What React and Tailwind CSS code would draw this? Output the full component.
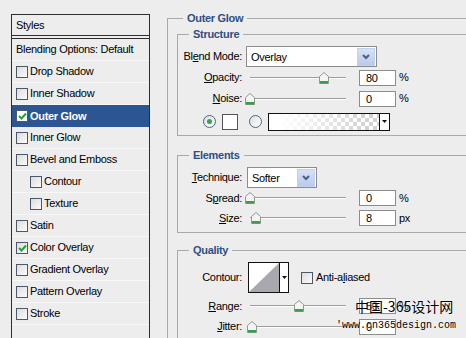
import React from 'react';

const font = { fontFamily: '"Liberation Sans", Arial, sans-serif' };

const Check = ({ checked, selected }) => (
  <div
    className={`w-[12px] h-[12px] shrink-0 border border-[#4a5868] flex items-center justify-center ${
      selected ? 'bg-white' : 'bg-gradient-to-br from-[#dcdcdc] to-[#fbfbfb]'
    }`}
  >
    {checked && (
      <svg width="9" height="8" viewBox="0 0 9 8">
        <path d="M1 4 L3.5 6.5 L8 1.5" fill="none" stroke="#22a33a" strokeWidth="2" />
      </svg>
    )}
  </div>
);

const styleRows = [
  { label: 'Drop Shadow' },
  { label: 'Inner Shadow' },
  { label: 'Outer Glow', checked: true, selected: true },
  { label: 'Inner Glow' },
  { label: 'Bevel and Emboss' },
  { label: 'Contour', indent: true },
  { label: 'Texture', indent: true },
  { label: 'Satin' },
  { label: 'Color Overlay', checked: true },
  { label: 'Gradient Overlay' },
  { label: 'Pattern Overlay' },
  { label: 'Stroke' },
];

const GroupHeader = ({ title, lead = 16 }) => (
  <div className="flex h-[14px]">
    <div className="self-end h-[7px] border-l border-t border-[#a9a9a9]" style={{ width: lead }} />
    <div className="px-[4px] text-[11px] leading-[14px] font-bold text-[#2d4f86]">{title}</div>
    <div className="self-end flex-1 h-[7px] border-t border-[#a9a9a9]" />
  </div>
);

const Chevron = () => (
  <div className="w-[18px] h-[18px] shrink-0 bg-gradient-to-b from-[#d6e2f5] to-[#b9cbea] border border-[#c3d2ec] flex items-center justify-center">
    <svg width="8" height="6" viewBox="0 0 8 6">
      <path d="M1 1 L4 4 L7 1" fill="none" stroke="#4b5f86" strokeWidth="2" />
    </svg>
  </div>
);

const Select = ({ value, width }) => (
  <div
    className="h-[21px] bg-white border border-[#8c8c8c] flex items-center pl-[4px] pr-[1px] text-[11px]"
    style={{ width }}
  >
    <span className="flex-1 pt-[2px]">{value}</span>
    <Chevron />
  </div>
);

const Label = ({ pre = '', u, post = '', width = 64 }) => (
  <div className="text-right text-[11px] shrink-0" style={{ width }}>
    {pre}
    <u>{u}</u>
    {post}
  </div>
);

const Thumb = () => (
  <svg width="10" height="12" viewBox="0 0 10 12">
    <path d="M5 0.5 L9.5 4.5 V11.5 H0.5 V4.5 Z" fill="#f4f4f4" stroke="#8e9a8e" />
    <rect x="1" y="9" width="8" height="2.5" fill="#3d9b4f" />
  </svg>
);

const Slider = ({ pos }) => (
  <div className="relative w-[106px] h-[14px] ml-[4px]">
    <div className="absolute left-[4px] right-[6px] top-[6px] h-[2px] border-t border-[#9d9d9d] border-b border-b-white" />
    <div className="absolute top-[1px]" style={{ left: pos - 5 }}>
      <Thumb />
    </div>
  </div>
);

const Field = ({ value, unit }) => (
  <>
    <div className="ml-[7px] w-[37px] h-[16px] bg-white border border-[#8c8c8c] text-[11px] leading-[14px] pl-[6px]">
      {value}
    </div>
    <div className="ml-[3px] text-[11px]">{unit}</div>
  </>
);

const SliderRow = ({ label, pos, value, unit, h = 21 }) => (
  <div className="flex items-center" style={{ height: h }}>
    {label}
    <Slider pos={pos} />
    <Field value={value} unit={unit} />
  </div>
);

const Radio = ({ on }) => (
  <div className="w-[13px] h-[13px] rounded-full border border-[#51667e] bg-gradient-to-br from-[#dedede] to-white flex items-center justify-center shrink-0">
    {on && <div className="w-[5px] h-[5px] rounded-full bg-[#3aa14c]" />}
  </div>
);

export default function App() {
  return (
    <div
      className="w-[466px] h-[338px] overflow-hidden bg-[#ededed] flex text-black relative tracking-[-0.3px]"
      style={font}
    >
      {/* styles list */}
      <div className="pl-[11px] pt-[14px] shrink-0">
        <div className="w-[139px] h-[400px] border border-[#2e2e2e] text-[11px]">
          <div className="h-[21px] border-b border-[#2e2e2e] flex items-center pl-[4px]">Styles</div>
          <div className="h-[3px] border-b border-[#2e2e2e]" />
          <div className="h-[22px] border-b border-[#f8f8f8] flex items-center pl-[4px]">
            Blending Options: Default
          </div>
          {styleRows.map((r) => (
            <div
              key={r.label}
              className={`h-[22px] flex items-center gap-[2px] ${
                r.selected ? 'bg-[#2c5594] text-white font-bold' : 'border-b border-[#f8f8f8]'
              } ${r.indent ? 'pl-[18px]' : 'pl-[4px]'}`}
            >
              <Check checked={r.checked} selected={r.selected} />
              <span>{r.label}</span>
            </div>
          ))}
        </div>
      </div>

      {/* settings */}
      <div className="ml-[17px] pt-[11px] w-[320px] shrink-0">
        <GroupHeader title="Outer Glow" lead={16} />
        <div className="border-l border-[#a9a9a9] pl-[9px] pt-[2px] h-[340px]">
          {/* Structure */}
          <GroupHeader title="Structure" lead={12} />
          <div className="border-l border-b border-[#a9a9a9] pt-[5px] pb-[3px]">
            <div className="flex items-center h-[21px]">
              <Label pre="Bl" u="e" post="nd Mode:" />
              <div className="ml-[4px]">
                <Select value="Overlay" width={131} />
              </div>
            </div>
            <SliderRow label={<Label u="O" post="pacity:" />} pos={78} value="80" unit="%" />
            <SliderRow label={<Label u="N" post="oise:" />} pos={4} value="0" unit="%" />
            <div className="flex items-center h-[21px] mt-[2px] pl-[25px]">
              <Radio on />
              <div className="ml-[6px] w-[16px] h-[16px] bg-white border border-[#555]" />
              <div className="ml-[11px]">
                <Radio />
              </div>
              <div className="ml-[6px] w-[122px] h-[18px] border border-[#111] flex">
                <div
                  className="flex-1"
                  style={{
                    background:
                      'linear-gradient(to right, #fff 10%, rgba(255,255,255,0) 90%), repeating-conic-gradient(#d2d2d2 0% 25%, #fff 0% 50%) 0 0 / 8px 8px',
                  }}
                />
                <div className="w-[10px] border-l border-[#111] bg-white flex items-center justify-center">
                  <svg width="5" height="3" viewBox="0 0 5 3">
                    <path d="M0 0 H5 L2.5 3 Z" fill="#111" />
                  </svg>
                </div>
              </div>
            </div>
          </div>

          {/* Elements */}
          <div className="mt-[12px]">
            <GroupHeader title="Elements" lead={12} />
            <div className="border-l border-b border-[#a9a9a9] pt-[5px] pb-[4px]">
              <div className="flex items-center h-[21px]">
                <Label u="T" post="echnique:" />
                <div className="ml-[5px]">
                  <Select value="Softer" width={70} />
                </div>
              </div>
              <SliderRow label={<Label pre="S" u="p" post="read:" />} pos={4} value="0" unit="%" h={20} />
              <SliderRow label={<Label u="S" post="ize:" />} pos={10} value="8" unit="px" h={20} />
            </div>
          </div>

          {/* Quality */}
          <div className="mt-[10px]">
            <GroupHeader title="Quality" lead={12} />
            <div className="border-l border-[#a9a9a9] pt-[5px] h-[120px]">
              <div className="flex items-center h-[31px]">
                <Label post="Contour:" />
                <div className="ml-[6px] w-[41px] h-[31px] border border-[#111] flex bg-white">
                  <svg width="30" height="29" viewBox="0 0 30 29" className="shrink-0">
                    <path d="M0 29 L30 0 V29 Z" fill="#a8a8ae" />
                  </svg>
                  <div className="flex-1 border-l border-[#111] flex items-center justify-center">
                    <svg width="5" height="3" viewBox="0 0 5 3">
                      <path d="M0 0 H5 L2.5 3 Z" fill="#111" />
                    </svg>
                  </div>
                </div>
                <div className="ml-[12px]">
                  <Check />
                </div>
                <div className="ml-[3px] text-[11px]">
                  Anti-a<u>l</u>iased
                </div>
              </div>
              <div className="mt-[3px]">
                <SliderRow label={<Label u="R" post="ange:" />} pos={53} value="50" unit="%" h={20} />
              </div>
              <SliderRow label={<Label u="J" post="itter:" />} pos={6} value="0" unit="" h={21} />
            </div>
          </div>
        </div>
      </div>

      {/* watermark */}
      <div
        className="absolute left-[355px] top-[298px] text-[14px] leading-[16px] tracking-normal [text-shadow:0_0_2px_#fff]"
        style={{ fontFamily: '"Noto Sans CJK SC", sans-serif' }}
      >
        中国-365设计网
      </div>
      <div
        className="absolute left-[336px] top-[319px] text-[10px] leading-[13px] tracking-normal [text-shadow:0_0_2px_#fff]"
        style={{ fontFamily: '"Liberation Mono", monospace' }}
      >
        'www.cn365design.com
      </div>
    </div>
  );
}
